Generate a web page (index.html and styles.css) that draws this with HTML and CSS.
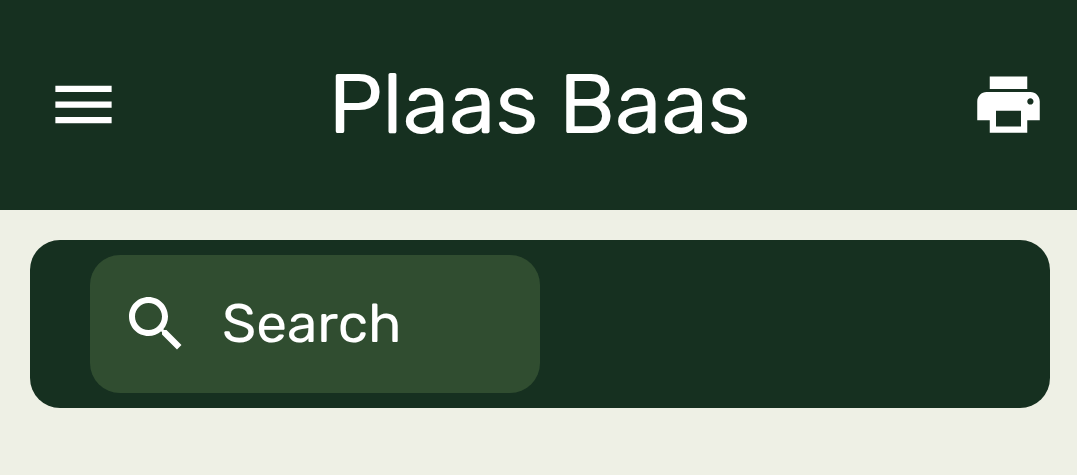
FILE: index.html
```html
<!DOCTYPE html>
<html lang="en">
<head>
<meta charset="utf-8">
<meta name="viewport" content="width=device-width, initial-scale=1">
<title>Plaas Baas</title>
<link rel="stylesheet" href="styles.css">
</head>
<body>
<header class="app-bar">
  <button class="icon-button menu-button" type="button" aria-label="Menu">
    <svg class="icon" viewBox="0 0 24 24"><path d="M3 18h18v-2H3v2zm0-5h18v-2H3v2zm0-7v2h18V6H3z"/></svg>
  </button>
  <h1 class="title">Plaas Baas</h1>
  <button class="icon-button print-button" type="button" aria-label="Print">
    <svg class="icon" viewBox="0 0 24 24"><path d="M19 8H5c-1.660 0-3 1.340-3 3v6h4v4h12v-4h4v-6c0-1.660-1.340-3-3-3zm-3 11H8v-5h8v5zm3-7c-.550 0-1-.450-1-1s.450-1 1-1 1 .450 1 1-.450 1-1 1zm-1-9H6v4h12V3z"/></svg>
  </button>
</header>
<main class="content">
  <div class="toolbar">
    <label class="search">
      <svg class="icon search-icon" viewBox="0 0 24 24" aria-hidden="true"><path d="M15.500 14h-.790l-.280-.270C15.410 12.590 16 11.110 16 9.500 16 5.910 13.090 3 9.500 3S3 5.910 3 9.500 5.910 16 9.500 16c1.610 0 3.090-.590 4.230-1.570l.270.280v.790l5 4.990L20.490 19l-4.990-5zm-6 0C7.010 14 5 11.990 5 9.500S7.010 5 9.500 5 14 7.010 14 9.500 11.990 14 9.500 14z"/></svg>
      <input class="search-input" type="text" placeholder="Search" aria-label="Search">
    </label>
  </div>
</main>
</body>
</html>
```
FILE: styles.css
```css
* {
  box-sizing: border-box;
}

body {
  margin: 0;
  min-height: 100vh;
  background: #eef0e5;
  color: #fff;
  font-family: Rubik, Roboto, "Liberation Sans", sans-serif;
  font-weight: 450;
}

.app-bar {
  display: grid;
  grid-template-columns: 1fr auto 1fr;
  align-items: center;
  padding: 52px 31px 54px 33px;
  background: #163020;
}

.icon-button {
  display: flex;
  padding: 0;
  border: 0;
  background: none;
  color: inherit;
}

.menu-button {
  justify-self: start;
  margin-left: 13px;
}

.print-button {
  justify-self: end;
}

.icon {
  flex: none;
  width: 75px;
  height: 75px;
  fill: currentColor;
}

.search-icon {
  width: 72px;
  height: 72px;
}

.title {
  margin: 0;
  font-size: 84px;
  font-weight: inherit;
  line-height: 104px;
}

.content {
  padding: 30px 27px 30px 30px;
}

.toolbar {
  padding: 15px 60px;
  border-radius: 30px;
  background: #163020;
}

.search {
  display: flex;
  align-items: center;
  gap: 30px;
  max-width: 450px;
  padding: 33px 30px;
  border-radius: 30px;
  background: #304d30;
}

.search-input {
  flex: 1;
  min-width: 0;
  padding: 0;
  border: 0;
  outline: 0;
  background: none;
  color: inherit;
  font: inherit;
  font-size: 55px;
  line-height: 68px;
}

.search-input::placeholder {
  color: inherit;
  opacity: 1;
}
```
